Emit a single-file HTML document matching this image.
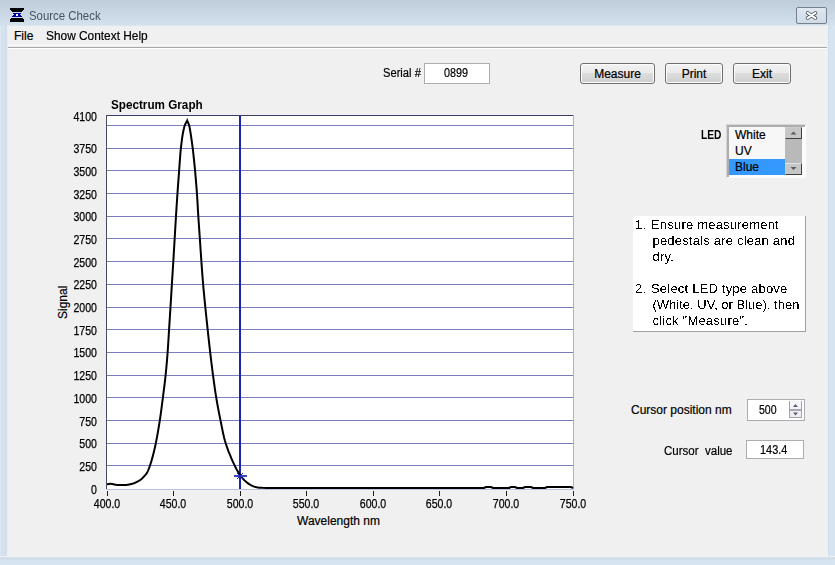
<!DOCTYPE html>
<html><head><meta charset="utf-8">
<style>
*{margin:0;padding:0;box-sizing:border-box}
html,body{width:835px;height:565px;overflow:hidden}
body{position:relative;background:#d7e4f2;font-family:"Liberation Sans",sans-serif;font-size:12px;color:#000}
.abs{position:absolute}
#titlebar{position:absolute;left:0;top:0;width:835px;height:27px;background:linear-gradient(#bfccd9 0,#d3e1ef 25px,#dce4ec 25px,#dce4ec 26px,#eef0f2 26px)}
#frameL{position:absolute;left:0;top:25px;width:9px;height:540px;background:linear-gradient(90deg,#dde9f5 0,#d6e2ee 1px,#d6e2ee 5px,#cfdbe6 5.5px,#dae4ee 6.5px,#e8edf3 7.5px,#eff1f3 9px)}
#client{position:absolute;left:9px;top:27px;width:817px;height:529px;background:#f0f0f0}
#menubar{position:absolute;left:9px;top:44px;width:817px;height:2px;background:#f4f4f4}
#menusep{position:absolute;left:8px;top:47px;width:819px;height:1px;background:#a6a6a6}
#menusep2{position:absolute;left:8px;top:48px;width:819px;height:1px;background:#ffffff}
.t{position:absolute;white-space:nowrap;line-height:14px;transform-origin:0 0;-webkit-text-stroke:0.2px #000}
.btn{position:absolute;height:21px;border:1px solid #707070;border-radius:3px;background:linear-gradient(#f2f2f2 0,#ebebeb 45%,#dddddd 50%,#cfcfcf 100%);box-shadow:inset 0 0 0 1px #fcfcfc}
.btn span{position:absolute;left:0;right:0;top:3px;text-align:center;line-height:14px;-webkit-text-stroke:0.2px #000}
.edit{position:absolute;background:#fff;border:1px solid #abadb3}
.yl{position:absolute;left:57.3px;width:40px;-webkit-text-stroke:0.25px #000;text-align:right;line-height:14px;font-size:12px;transform:scaleX(0.88);transform-origin:100% 0}
.xl{position:absolute;top:496.5px;width:40px;-webkit-text-stroke:0.25px #000;text-align:center;line-height:14px;font-size:12px;transform:scaleX(0.88);transform-origin:50% 0}
.ins{position:absolute;font-size:13px;line-height:16px;white-space:nowrap;letter-spacing:0.2px}
.ins i{font-style:normal;padding-left:1.5px}
</style></head><body>
<div id="titlebar"></div>
<div id="frameL"></div>
<div class="abs" style="left:826px;top:25px;width:9px;height:540px;background:linear-gradient(90deg,#eff1f3 0,#eef2f6 1px,#eef2f6 2px,#d0dde8 2.5px,#d6e3f0 3.5px,#d6e3f0 9px)"></div>
<div class="abs" style="left:0;top:556px;width:835px;height:9px;background:linear-gradient(#eef2f6 0,#eef2f6 1px,#d3dfea 1.5px,#cfdbe6 3px,#d6e3f0 4px,#d8e5f2 9px)"></div>
<div id="client"></div>
<div id="menubar"></div>
<div id="menusep"></div>
<div id="menusep2"></div>

<!-- icon -->
<svg class="abs" style="left:10px;top:8px" width="14" height="14" viewBox="0 0 14 14" shape-rendering="crispEdges">
<path d="M0 0H14V2H13V3H12V4H2V3H1V2H0Z" fill="#000"/>
<path d="M3 5H11V6H10V7H11V8H12V9H2V8H3V7H4V6H3Z" fill="#0000a8"/>
<rect x="6" y="6" width="2" height="2" fill="#fff"/>
<path d="M1 10H13V11H14V14H0V11H1Z" fill="#000"/>
</svg>
<div class="t" id="title" style="-webkit-text-stroke:0;left:29px;top:8px;font-size:13px;color:#46525e;line-height:16px;transform:scaleX(0.877)">Source Check</div>

<!-- close button -->
<div class="abs" style="left:796px;top:7px;width:31px;height:17px;border:1px solid #75808f;border-radius:2px;background:linear-gradient(#e0e8f0,#d0dbe6)"></div>
<svg class="abs" style="left:803px;top:8px" width="17" height="15" viewBox="0 0 17 15">
<path d="M4.6 4.9L12.4 10.1M12.4 4.9L4.6 10.1" stroke="#46505c" stroke-width="3.6" stroke-linecap="round"/>
<path d="M4.6 4.9L12.4 10.1M12.4 4.9L4.6 10.1" stroke="#ffffff" stroke-width="2" stroke-linecap="round"/>
</svg>
<!-- menu -->
<div class="t" id="mFile" style="left:14px;top:29px">File</div>
<div class="t" id="mHelp" style="left:46px;top:29px;transform:scaleX(0.99)">Show Context Help</div>

<!-- serial -->
<div class="t" id="serialL" style="left:383px;top:65.5px;transform:scaleX(0.93)">Serial #</div>
<div class="edit" style="left:424px;top:63px;width:66px;height:21px"></div>
<div class="t" id="serialV" style="left:443.5px;top:66px;transform:scaleX(0.9)">0899</div>

<!-- buttons -->
<div class="btn" style="left:580px;top:63px;width:75px"><span id="bMeasure">Measure</span></div>
<div class="btn" style="left:665px;top:63px;width:58px"><span id="bPrint">Print</span></div>
<div class="btn" style="left:733px;top:63px;width:58px"><span id="bExit">Exit</span></div>

<!-- chart -->
<div class="t" id="chartTitle" style="-webkit-text-stroke:0;left:111px;top:98px;font-weight:bold;transform:scaleX(0.975)">Spectrum Graph</div>
<div class="abs" style="left:107px;top:116px;width:466px;height:373px;background:#fff"></div>
<svg class="abs" style="left:0;top:0" width="835" height="565" viewBox="0 0 835 565">
<g shape-rendering="crispEdges">
<rect x="107" y="465" width="466" height="1" fill="#7a7ebc"/><rect x="107" y="443" width="466" height="1" fill="#7a7ebc"/><rect x="107" y="420" width="466" height="1" fill="#7a7ebc"/><rect x="107" y="397" width="466" height="1" fill="#7a7ebc"/><rect x="107" y="375" width="466" height="1" fill="#7a7ebc"/><rect x="107" y="352" width="466" height="1" fill="#7a7ebc"/><rect x="107" y="329" width="466" height="1" fill="#7a7ebc"/><rect x="107" y="307" width="466" height="1" fill="#7a7ebc"/><rect x="107" y="284" width="466" height="1" fill="#7a7ebc"/><rect x="107" y="261" width="466" height="1" fill="#7a7ebc"/><rect x="107" y="238" width="466" height="1" fill="#7a7ebc"/><rect x="107" y="216" width="466" height="1" fill="#7a7ebc"/><rect x="107" y="193" width="466" height="1" fill="#7a7ebc"/><rect x="107" y="170" width="466" height="1" fill="#7a7ebc"/><rect x="107" y="148" width="466" height="1" fill="#7a7ebc"/><rect x="107" y="125" width="466" height="1" fill="#7a7ebc"/>
<rect x="106" y="115" width="467" height="1" fill="#3a3f62"/>
<rect x="106" y="115" width="1" height="375" fill="#464d62"/>
<rect x="573" y="115" width="1" height="375" fill="#a8b0d4"/>
<rect x="106" y="489" width="468" height="1" fill="#b8c4e4"/>
<rect x="107" y="491" width="1" height="5" fill="#202020"/><rect x="173" y="491" width="1" height="5" fill="#202020"/><rect x="240" y="491" width="1" height="5" fill="#202020"/><rect x="306" y="491" width="1" height="5" fill="#202020"/><rect x="373" y="491" width="1" height="5" fill="#202020"/><rect x="439" y="491" width="1" height="5" fill="#202020"/><rect x="506" y="491" width="1" height="5" fill="#202020"/><rect x="573" y="491" width="1" height="5" fill="#202020"/>
<rect x="239" y="116" width="2" height="373" fill="#1c22b4"/>
</g>
<path d="M107.00 484.30 L107.46 484.23 L107.92 484.15 L108.38 484.06 L108.85 483.98 L109.30 483.91 L109.75 483.85 L110.19 483.81 L110.60 483.80 L110.92 483.81 L111.23 483.85 L111.52 483.89 L111.81 483.95 L112.10 484.01 L112.39 484.07 L112.69 484.14 L113.00 484.20 L113.35 484.27 L113.71 484.35 L114.07 484.43 L114.43 484.51 L114.80 484.60 L115.19 484.67 L115.58 484.74 L116.00 484.80 L116.56 484.86 L117.15 484.90 L117.77 484.93 L118.40 484.96 L119.05 484.97 L119.70 484.99 L120.35 484.99 L121.00 485.00 L121.69 485.01 L122.41 485.01 L123.14 485.02 L123.87 485.02 L124.59 485.01 L125.29 484.98 L125.97 484.95 L126.60 484.90 L127.07 484.85 L127.51 484.79 L127.93 484.73 L128.34 484.65 L128.75 484.57 L129.15 484.49 L129.57 484.40 L130.00 484.30 L130.49 484.19 L131.00 484.07 L131.51 483.94 L132.02 483.81 L132.54 483.67 L133.04 483.52 L133.53 483.36 L134.00 483.20 L134.40 483.05 L134.79 482.89 L135.16 482.72 L135.53 482.55 L135.89 482.37 L136.25 482.18 L136.62 481.99 L137.00 481.80 L137.42 481.59 L137.85 481.37 L138.28 481.15 L138.72 480.93 L139.15 480.69 L139.58 480.44 L139.99 480.18 L140.40 479.90 L140.81 479.59 L141.21 479.26 L141.60 478.91 L141.99 478.55 L142.37 478.18 L142.74 477.79 L143.12 477.40 L143.50 477.00 L143.92 476.55 L144.35 476.10 L144.78 475.64 L145.20 475.16 L145.62 474.67 L146.02 474.14 L146.42 473.59 L146.80 473.00 L147.25 472.20 L147.69 471.35 L148.10 470.46 L148.50 469.52 L148.88 468.54 L149.26 467.54 L149.63 466.53 L150.00 465.50 L150.42 464.28 L150.83 463.00 L151.23 461.70 L151.62 460.36 L152.00 459.00 L152.38 457.64 L152.74 456.27 L153.10 454.90 L153.46 453.51 L153.81 452.14 L154.15 450.77 L154.47 449.39 L154.80 447.97 L155.13 446.49 L155.46 444.94 L155.80 443.30 L156.29 440.82 L156.80 438.15 L157.32 435.32 L157.84 432.39 L158.35 429.40 L158.86 426.39 L159.34 423.41 L159.80 420.50 L160.23 417.63 L160.65 414.75 L161.04 411.87 L161.43 408.99 L161.80 406.11 L162.17 403.23 L162.54 400.36 L162.90 397.50 L163.26 394.70 L163.62 391.91 L163.97 389.12 L164.32 386.34 L164.65 383.57 L164.98 380.78 L165.30 378.00 L165.60 375.20 L165.89 372.38 L166.16 369.55 L166.43 366.72 L166.68 363.89 L166.92 361.05 L167.15 358.21 L167.38 355.36 L167.60 352.50 L167.81 349.58 L168.01 346.64 L168.20 343.68 L168.39 340.73 L168.57 337.77 L168.74 334.83 L168.92 331.90 L169.10 329.00 L169.28 326.22 L169.45 323.46 L169.63 320.72 L169.81 317.99 L169.98 315.25 L170.15 312.52 L170.33 309.77 L170.50 307.00 L170.68 304.15 L170.85 301.28 L171.03 298.40 L171.20 295.52 L171.38 292.63 L171.55 289.74 L171.72 286.87 L171.90 284.00 L172.07 281.18 L172.25 278.37 L172.43 275.57 L172.60 272.77 L172.78 269.96 L172.95 267.15 L173.13 264.33 L173.30 261.50 L173.48 258.58 L173.65 255.64 L173.83 252.69 L174.01 249.73 L174.18 246.78 L174.35 243.83 L174.53 240.90 L174.70 238.00 L174.86 235.22 L175.02 232.46 L175.18 229.72 L175.34 226.98 L175.50 224.25 L175.66 221.52 L175.83 218.77 L176.00 216.00 L176.18 213.15 L176.36 210.27 L176.54 207.39 L176.73 204.50 L176.92 201.61 L177.11 198.73 L177.30 195.85 L177.50 193.00 L177.70 190.17 L177.90 187.29 L178.11 184.38 L178.33 181.50 L178.53 178.68 L178.74 175.96 L178.93 173.39 L179.10 171.00 L179.21 169.44 L179.32 167.98 L179.42 166.60 L179.51 165.26 L179.60 163.96 L179.70 162.66 L179.80 161.35 L179.90 160.00 L180.00 158.64 L180.10 157.29 L180.20 155.94 L180.30 154.60 L180.41 153.24 L180.52 151.86 L180.65 150.45 L180.80 149.00 L180.99 147.21 L181.21 145.30 L181.45 143.32 L181.70 141.32 L181.95 139.36 L182.21 137.50 L182.46 135.80 L182.70 134.30 L182.84 133.50 L182.98 132.76 L183.11 132.07 L183.25 131.42 L183.38 130.80 L183.52 130.19 L183.66 129.60 L183.80 129.00 L183.92 128.51 L184.02 128.03 L184.13 127.58 L184.24 127.13 L184.35 126.68 L184.48 126.23 L184.63 125.77 L184.80 125.30 L185.04 124.72 L185.31 124.13 L185.60 123.53 L185.92 122.93 L186.24 122.32 L186.57 121.71 L186.89 121.10 L187.20 120.50 L187.44 121.09 L187.69 121.66 L187.94 122.23 L188.19 122.80 L188.43 123.38 L188.67 123.99 L188.89 124.62 L189.10 125.30 L189.35 126.24 L189.57 127.23 L189.77 128.26 L189.96 129.33 L190.14 130.44 L190.32 131.59 L190.51 132.78 L190.70 134.00 L190.97 135.69 L191.24 137.52 L191.52 139.43 L191.80 141.39 L192.07 143.36 L192.33 145.32 L192.57 147.21 L192.80 149.00 L192.98 150.46 L193.14 151.87 L193.29 153.25 L193.44 154.60 L193.58 155.95 L193.72 157.29 L193.86 158.64 L194.00 160.00 L194.14 161.35 L194.28 162.66 L194.41 163.96 L194.55 165.26 L194.68 166.60 L194.82 167.98 L194.96 169.44 L195.10 171.00 L195.31 173.38 L195.54 175.96 L195.77 178.67 L196.01 181.50 L196.24 184.38 L196.47 187.29 L196.69 190.17 L196.90 193.00 L197.10 195.85 L197.28 198.72 L197.45 201.61 L197.62 204.50 L197.78 207.39 L197.95 210.27 L198.12 213.15 L198.30 216.00 L198.48 218.77 L198.66 221.52 L198.85 224.25 L199.04 226.99 L199.23 229.72 L199.42 232.46 L199.61 235.22 L199.80 238.00 L200.00 240.90 L200.19 243.83 L200.39 246.78 L200.59 249.73 L200.79 252.69 L200.99 255.64 L201.19 258.58 L201.40 261.50 L201.60 264.33 L201.80 267.15 L202.01 269.96 L202.21 272.77 L202.42 275.57 L202.64 278.37 L202.86 281.18 L203.10 284.00 L203.35 286.87 L203.61 289.75 L203.88 292.63 L204.16 295.52 L204.44 298.40 L204.73 301.28 L205.01 304.15 L205.30 307.00 L205.58 309.77 L205.86 312.52 L206.14 315.26 L206.43 317.99 L206.72 320.72 L207.01 323.46 L207.30 326.22 L207.60 329.00 L207.91 331.89 L208.23 334.81 L208.55 337.74 L208.87 340.68 L209.20 343.62 L209.53 346.56 L209.86 349.49 L210.20 352.40 L210.54 355.26 L210.87 358.11 L211.21 360.95 L211.56 363.79 L211.91 366.62 L212.26 369.45 L212.63 372.28 L213.00 375.10 L213.37 377.90 L213.75 380.68 L214.12 383.47 L214.51 386.25 L214.91 389.03 L215.32 391.81 L215.75 394.60 L216.20 397.40 L216.68 400.26 L217.18 403.13 L217.70 406.01 L218.23 408.89 L218.78 411.77 L219.34 414.65 L219.91 417.53 L220.50 420.40 L221.08 423.28 L221.65 426.16 L222.23 429.04 L222.82 431.92 L223.45 434.79 L224.12 437.65 L224.87 440.48 L225.70 443.30 L226.64 446.17 L227.69 449.11 L228.81 452.07 L229.99 454.99 L231.18 457.84 L232.36 460.55 L233.51 463.09 L234.60 465.40 L235.32 466.87 L236.03 468.26 L236.73 469.60 L237.42 470.86 L238.11 472.05 L238.78 473.17 L239.45 474.22 L240.10 475.20 L240.54 475.82 L240.97 476.40 L241.39 476.93 L241.81 477.44 L242.23 477.92 L242.65 478.38 L243.07 478.84 L243.50 479.30 L243.90 479.71 L244.29 480.12 L244.69 480.51 L245.10 480.89 L245.50 481.26 L245.90 481.62 L246.30 481.97 L246.70 482.30 L247.05 482.58 L247.40 482.85 L247.75 483.11 L248.09 483.36 L248.44 483.60 L248.79 483.84 L249.14 484.07 L249.50 484.30 L249.85 484.52 L250.20 484.74 L250.56 484.95 L250.91 485.15 L251.27 485.35 L251.64 485.54 L252.02 485.72 L252.40 485.90 L252.83 486.08 L253.26 486.25 L253.71 486.41 L254.17 486.57 L254.63 486.72 L255.09 486.85 L255.55 486.98 L256.00 487.10 L256.41 487.20 L256.78 487.29 L257.14 487.38 L257.51 487.45 L257.90 487.52 L258.35 487.58 L258.88 487.64 L259.50 487.70 L262.44 487.86 L266.51 487.96 L271.45 488.01 L276.98 488.02 L282.87 488.00 L288.84 487.99 L294.63 487.98 L300.00 488.00 L484.00 488.00 L486.00 487.00 L491.00 487.00 L493.00 488.00 L509.00 488.00 L511.00 487.00 L515.00 487.00 L517.00 488.00 L523.00 488.00 L525.00 487.00 L531.00 487.00 L533.00 488.00 L545.00 488.00 L547.00 487.00 L571.00 487.00 L573.00 488.00" fill="none" stroke="#000" stroke-width="2" stroke-linejoin="miter"/>
<g shape-rendering="crispEdges"><rect x="234" y="475" width="13" height="2" fill="#3a44c0"/></g>
<path d="M237 473L243 479M243 473L237 479" stroke="#1c22b4" stroke-width="1"/>
</svg>
<div class="yl" style="top:109.5px">4100</div><div class="yl" style="top:142.3px">3750</div><div class="yl" style="top:164.9px">3500</div><div class="yl" style="top:187.6px">3250</div><div class="yl" style="top:210.3px">3000</div><div class="yl" style="top:233.0px">2750</div><div class="yl" style="top:255.7px">2500</div><div class="yl" style="top:278.4px">2250</div><div class="yl" style="top:301.0px">2000</div><div class="yl" style="top:323.7px">1750</div><div class="yl" style="top:346.4px">1500</div><div class="yl" style="top:369.1px">1250</div><div class="yl" style="top:391.8px">1000</div><div class="yl" style="top:414.5px">750</div><div class="yl" style="top:437.1px">500</div><div class="yl" style="top:459.8px">250</div><div class="yl" style="top:482.5px">0</div>
<div class="xl" style="left:86.5px">400.0</div><div class="xl" style="left:153.1px">450.0</div><div class="xl" style="left:219.6px">500.0</div><div class="xl" style="left:286.2px">550.0</div><div class="xl" style="left:352.8px">600.0</div><div class="xl" style="left:419.4px">650.0</div><div class="xl" style="left:485.9px">700.0</div><div class="xl" style="left:552.5px">750.0</div>
<div class="t" id="signal" style="left:56px;top:318.5px;transform:rotate(-90deg);transform-origin:0 0">Signal</div>
<div class="t" id="wave" style="left:297px;top:514px">Wavelength nm</div>

<!-- LED -->
<div class="t" id="led" style="-webkit-text-stroke:0;left:701px;top:128px;font-weight:bold;transform:scaleX(0.85)">LED</div>
<div class="abs" style="left:726px;top:124px;width:80px;height:54px;background:#fcfcfc;border-top:1px solid #d6d6d6;border-left:1px solid #d6d6d6"></div>
<div class="abs" style="left:727px;top:125px;width:78px;height:2px;background:#adadad"></div>
<div class="abs" style="left:727px;top:125px;width:2px;height:52px;background:#adadad"></div>
<div class="abs" style="left:729px;top:127px;width:73px;height:48px;background:#f7f7f7"></div>
<div class="abs" style="left:729px;top:159px;width:56px;height:16px;background:#3399ff"></div>
<div class="t" id="iWhite" style="left:735px;top:128px">White</div>
<div class="t" id="iUV" style="left:735px;top:144px">UV</div>
<div class="t" id="iBlue" style="left:735px;top:160px;color:#000">Blue</div>
<div class="abs" style="left:785px;top:127px;width:17px;height:48px;background:#b9b9b9"></div>
<div class="abs" style="left:785px;top:127px;width:17px;height:12px;background:#c6c6c6;border-style:solid;border-width:1px;border-color:#cccccc #404040 #404040 #cccccc"></div>
<div class="abs" style="left:785px;top:163px;width:17px;height:12px;background:#c6c6c6;border-style:solid;border-width:1px;border-color:#e4e4e4 #404040 #404040 #cccccc"></div>
<svg class="abs" style="left:785px;top:127px" width="17" height="48" viewBox="0 0 17 48">
<path d="M5.5 7.5L8.5 4.5L11.5 7.5Z" fill="#5a5a5a"/>
<path d="M5.5 40L8.5 43L11.5 40Z" fill="#5a5a5a"/>
</svg>

<!-- instructions -->
<svg width="0" height="0" style="position:absolute"><filter id="aliased" x="0" y="0" width="100%" height="100%"><feComponentTransfer><feFuncA type="discrete" tableValues="0 1"/></feComponentTransfer></filter></svg>
<div class="abs" style="left:633px;top:216px;width:173px;height:116px;background:#fff;border-right:1px solid #a0a0a0;border-bottom:1px solid #a0a0a0"></div>
<div id="insWrap" style="position:absolute;left:0;top:0;width:835px;height:565px;filter:url(#aliased)">
<div class="ins" id="n1" style="left:635px;top:217px">1.</div>
<div class="ins" id="l1" style="left:651px;top:217px">Ensure measurement<br><i>pedestals are clean and</i><br><i>dry.</i></div>
<div class="ins" id="n2" style="left:635px;top:281px">2.</div>
<div class="ins" id="l2" style="left:651px;top:281px">Select LED type above<br><i style="letter-spacing:0">(White, UV, or Blue), then</i><br><i>click "Measure".</i></div>
</div>

<!-- cursor -->
<div class="t" id="cpos" style="left:631px;top:403px">Cursor position nm</div>
<div class="edit" style="left:747px;top:399px;width:58px;height:22px"></div>
<div class="t" id="cposV" style="left:758.5px;top:403px;transform:scaleX(0.88)">500</div>
<div class="abs" style="left:789px;top:401px;width:13px;height:17px;border:1px solid #a4a4a4;border-top:0;background:linear-gradient(#f8f8fc,#ececf2)"></div>
<div class="abs" style="left:790px;top:409px;width:11px;height:2px;background:#a8a8b4"></div>
<svg class="abs" style="left:789px;top:401px" width="13" height="17" viewBox="0 0 13 17">
<path d="M4 6L6.5 3L9 6Z" fill="#5a5a70"/>
<path d="M4 11.5L6.5 14.5L9 11.5Z" fill="#5a5a70"/>
</svg>
<div class="t" id="cval" style="left:664px;top:444px;transform:scaleX(0.96)">Cursor&nbsp; value</div>
<div class="edit" style="left:746px;top:440px;width:58px;height:19px"></div>
<div class="t" id="cvalV" style="left:760px;top:443px;transform:scaleX(0.91)">143.4</div>
</body></html>
